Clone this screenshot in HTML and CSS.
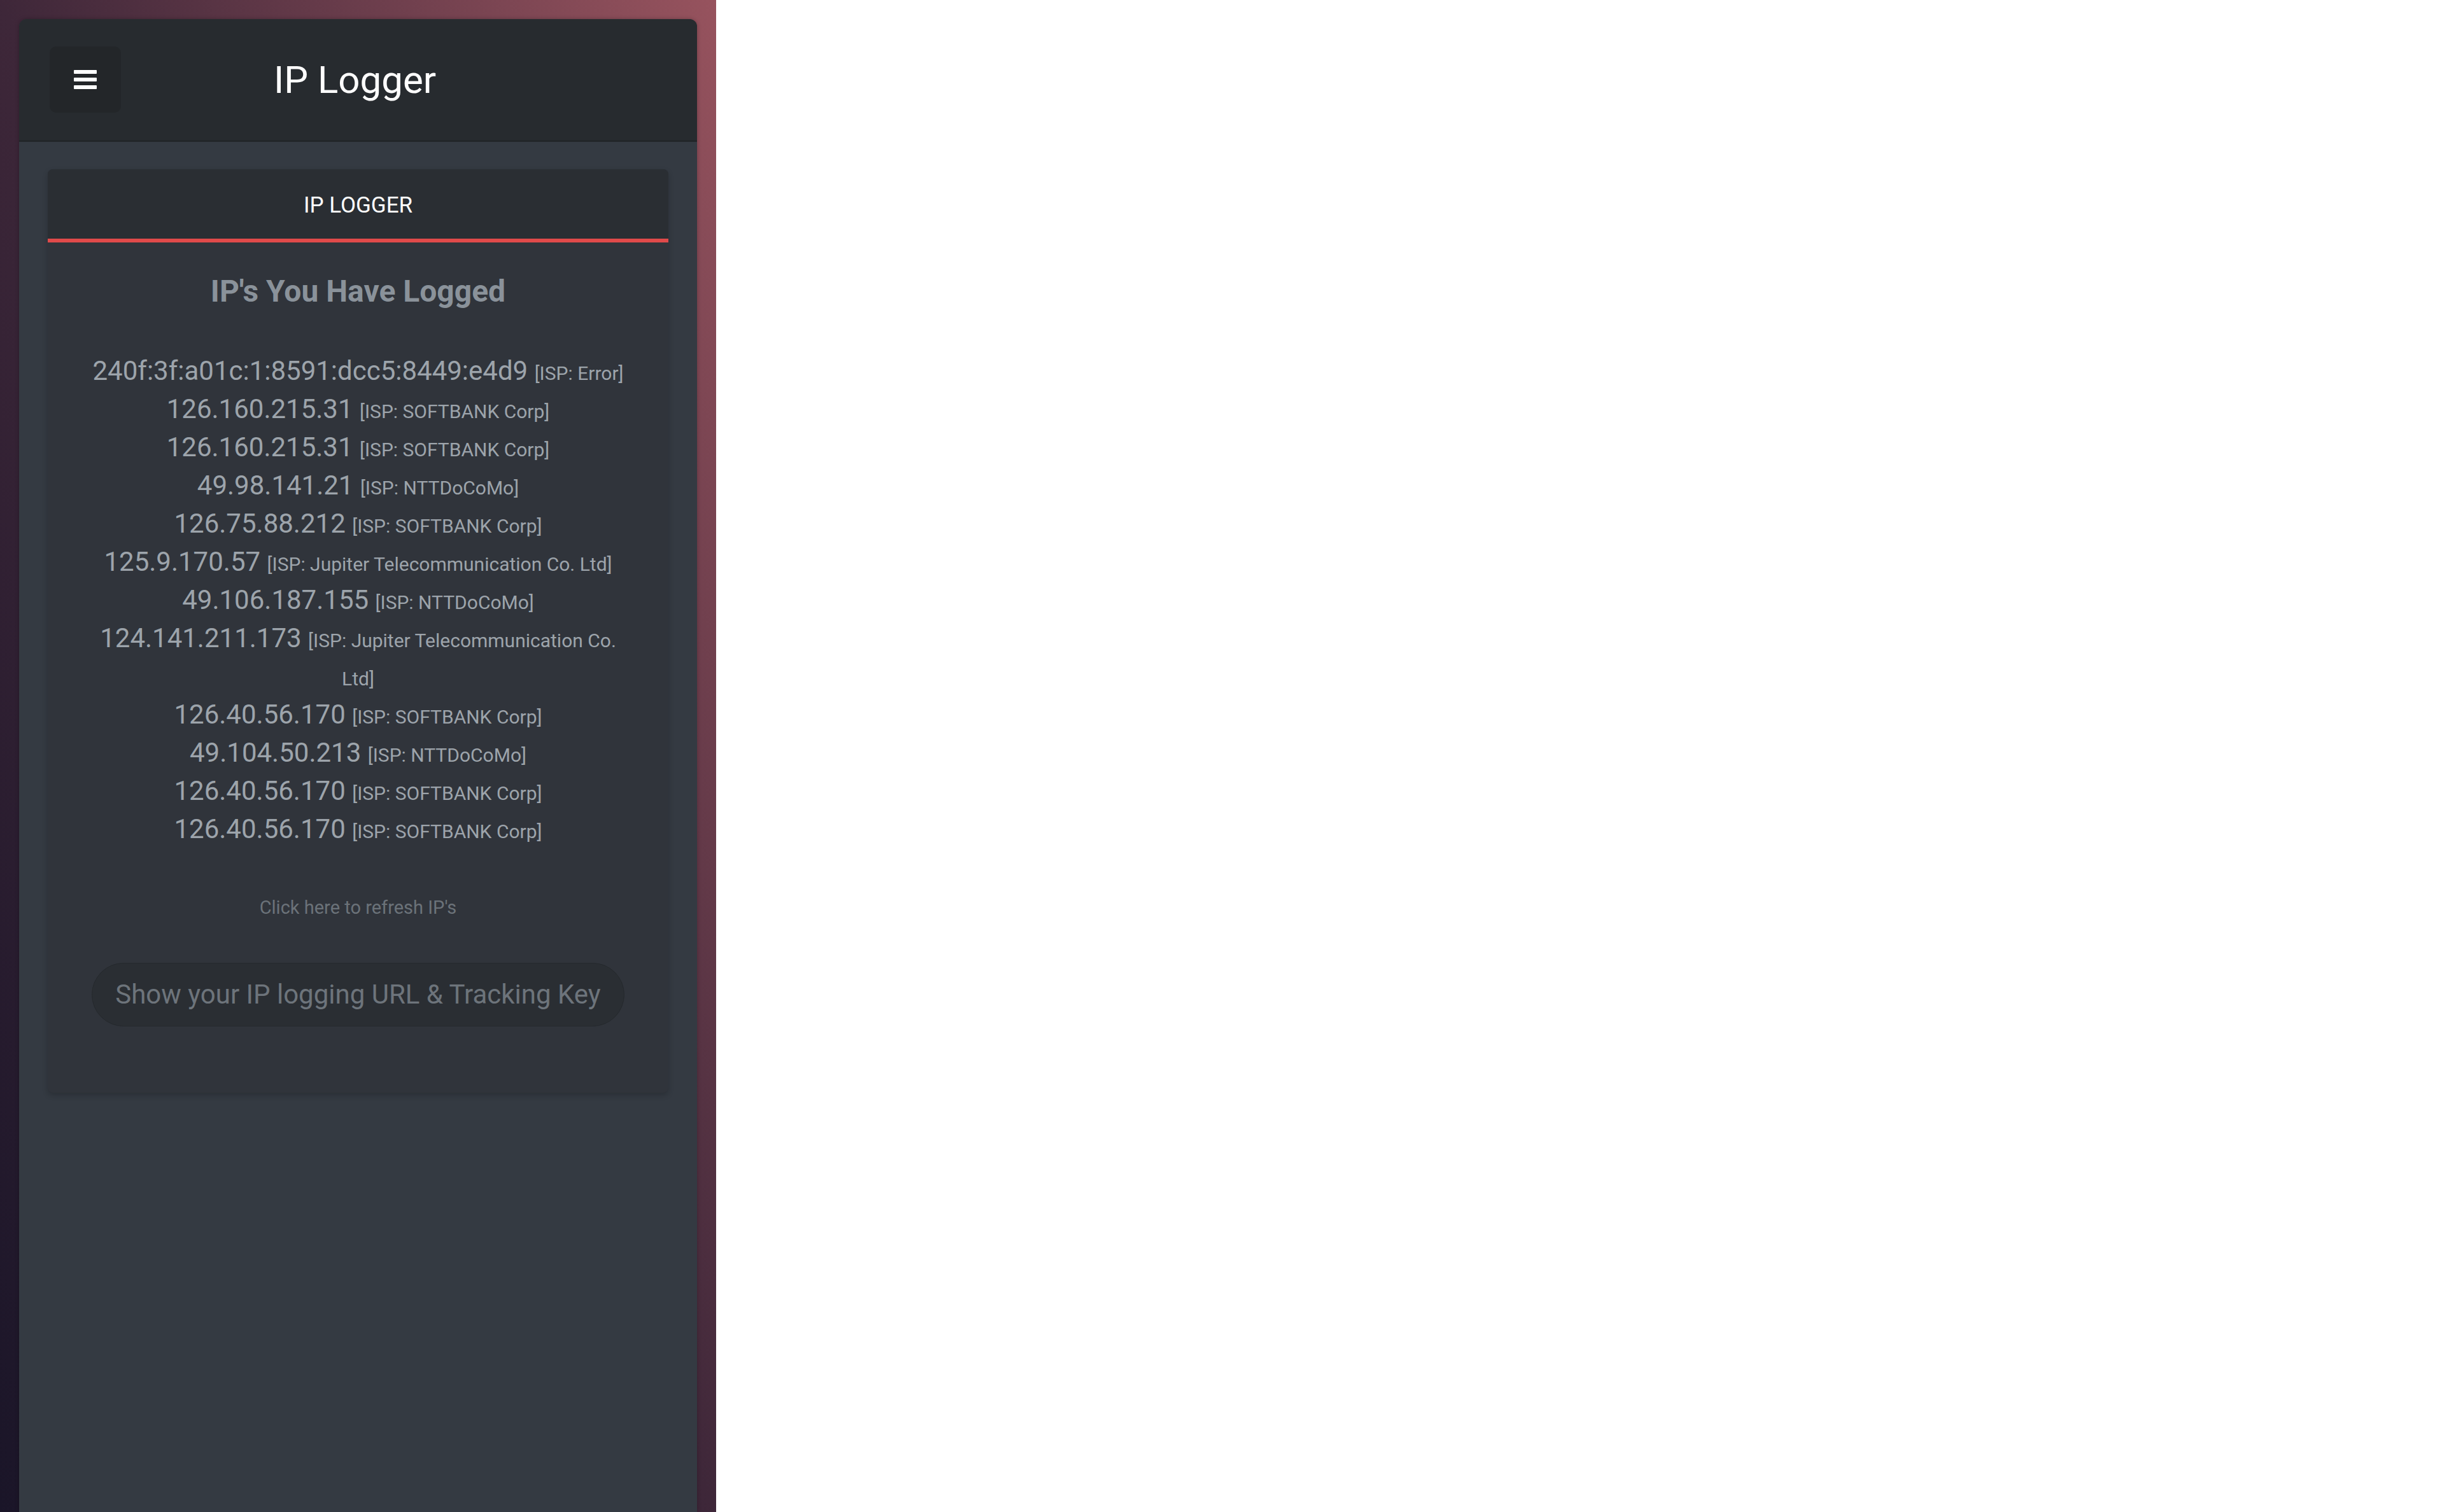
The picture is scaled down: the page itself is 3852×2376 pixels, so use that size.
FILE: index.html
```html
<!DOCTYPE html>
<html lang="en">
<head>
    <meta charset="UTF-8">
    <meta name="viewport" content="width=device-width, initial-scale=1.0">
    <title>IP Logger</title>
    <link rel="stylesheet" href="styles.css">
</head>
<body>
    <div class="backdrop">
        <div class="app">
            <div class="topbar">
                <button class="menu-btn" aria-label="Menu">
                    <svg width="36" height="30" viewBox="0 0 36 30">
                        <rect x="0" y="0" width="36" height="6" rx="1"/>
                        <rect x="0" y="12" width="36" height="6" rx="1"/>
                        <rect x="0" y="24" width="36" height="6" rx="1"/>
                    </svg>
                </button>
                <h1 class="title">IP Logger</h1>
            </div>

            <div class="main">
                <div class="card">
                    <div class="tabs">
                        <div class="tab active">IP LOGGER</div>
                    </div>

                    <div class="card-body">
                        <h2>IP's You Have Logged</h2>

                        <!-- logged addresses -->
                        <div class="ip-list">
                            <div class="ip">240f:3f:a01c:1:8591:dcc5:8449:e4d9 <small>[ISP: Error]</small></div>
                            <div class="ip">126.160.215.31 <small>[ISP: SOFTBANK Corp]</small></div>
                            <div class="ip">126.160.215.31 <small>[ISP: SOFTBANK Corp]</small></div>
                            <div class="ip">49.98.141.21 <small>[ISP: NTTDoCoMo]</small></div>
                            <div class="ip">126.75.88.212 <small>[ISP: SOFTBANK Corp]</small></div>
                            <div class="ip">125.9.170.57 <small>[ISP: Jupiter Telecommunication Co. Ltd]</small></div>
                            <div class="ip">49.106.187.155 <small>[ISP: NTTDoCoMo]</small></div>
                            <div class="ip">124.141.211.173 <small>[ISP: Jupiter Telecommunication Co. Ltd]</small></div>
                            <div class="ip">126.40.56.170 <small>[ISP: SOFTBANK Corp]</small></div>
                            <div class="ip">49.104.50.213 <small>[ISP: NTTDoCoMo]</small></div>
                            <div class="ip">126.40.56.170 <small>[ISP: SOFTBANK Corp]</small></div>
                            <div class="ip">126.40.56.170 <small>[ISP: SOFTBANK Corp]</small></div>
                        </div>

                        <a class="refresh" href="#">Click here to refresh IP's</a>

                        <button class="show-key">Show your IP logging URL &amp; Tracking Key</button>
                    </div>
                </div>
            </div>
        </div>
    </div>
</body>
</html>
```

FILE: styles.css
```css
body {
    margin: 0;
    padding: 0;
    background-color: #fff;
    font-family: Roboto, "Liberation Sans", Arial, sans-serif;
}

.backdrop {
    width: 1125px;
    min-height: 100vh;
    box-sizing: border-box;
    padding: 30px 30px 0 30px;
    display: flex;
    flex-direction: column;
    background: linear-gradient(to top right, #1a1528 0%, #3e2739 50%, #97535e 100%);
}

.app {
    flex: 1;
    display: flex;
    flex-direction: column;
    background-color: #343a42;
    border-radius: 12px 12px 0 0;
    box-shadow: 0 0 6px rgba(0, 0, 0, 0.25);
}

/* top bar */
.topbar {
    height: 190px;
    display: flex;
    align-items: center;
    padding: 0 170px 0 48px;
    background-color: #272b2f;
    border-bottom: 3px solid #222629;
    border-radius: 12px 12px 0 0;
}

.menu-btn {
    width: 112px;
    height: 104px;
    border: none;
    border-radius: 10px;
    background-color: #232629;
    display: flex;
    align-items: center;
    justify-content: center;
    cursor: pointer;
}

.menu-btn svg {
    fill: #fff;
}

.title {
    flex: 1;
    margin: 0;
    text-align: center;
    color: #fff;
    font-size: 60px;
    font-weight: 400;
}

.main {
    flex: 1;
    padding: 43px 45px;
}

/* card */
.card {
    background-color: #30343b;
    border-radius: 8px;
    box-shadow: 0 4px 10px rgba(0, 0, 0, 0.2);
}

.tabs {
    display: flex;
    background-color: #2a2e33;
    border-radius: 8px 8px 0 0;
}

.tab {
    flex: 1;
    height: 109px;
    line-height: 113px;
    text-align: center;
    color: #fff;
    font-size: 35px;
    text-transform: uppercase;
}

.tab.active {
    border-bottom: 6px solid #e04a4a;
}

.card-body {
    padding: 51px 69px 104px;
    text-align: center;
}

.card-body h2 {
    margin: 0;
    font-size: 48px;
    line-height: 1.1;
    font-weight: 700;
    color: #8a929a;
}

.ip-list {
    margin-top: 68px;
}

.ip {
    font-size: 42px;
    line-height: 60px;
    color: #9da4ab;
}

.ip small {
    font-size: 30px;
    line-height: 1;
}

.refresh {
    display: block;
    margin-top: 73px;
    font-size: 29px;
    line-height: 41px;
    color: #6b7279;
    text-decoration: none;
}

.show-key {
    display: block;
    width: 100%;
    margin-top: 66px;
    padding: 25px 20px;
    font-family: inherit;
    font-size: 42px;
    line-height: 48px;
    color: #6d747b;
    background-color: #2a2e33;
    border: 1px solid #25292d;
    border-radius: 50px;
    cursor: pointer;
}
```
